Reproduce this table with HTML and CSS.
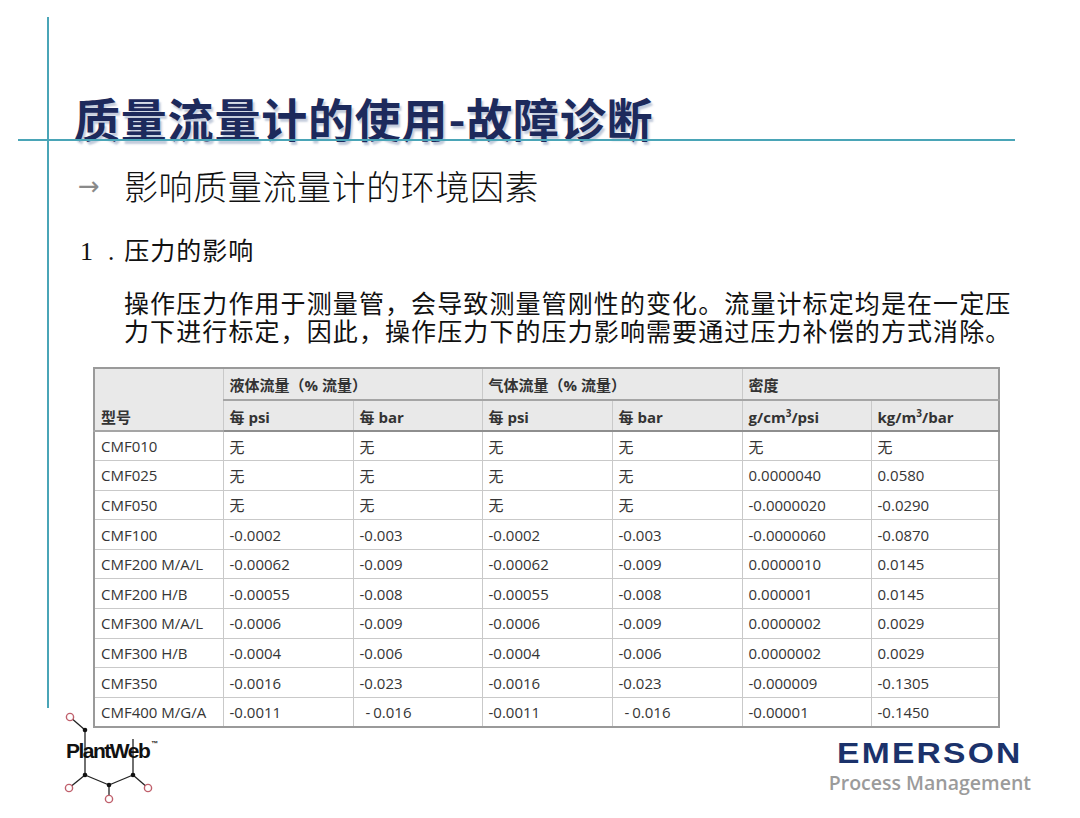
FILE: index.html
```html
<!DOCTYPE html>
<html lang="zh-CN">
<head>
<meta charset="utf-8">
<title>质量流量计的使用-故障诊断</title>
<link rel="stylesheet" href="styles.css">
</head>
<body>
<div class="slide">
  <div class="content">
    <h1 class="title">质量流量计的使用-故障诊断</h1>
    <div class="subtitle"><span class="arrow">→</span><span class="sub-text">影响质量流量计的环境因素</span></div>
    <div class="item-head"><span class="num">1</span><span class="dot">.</span><span class="item-title">压力的影响</span></div>
    <p class="para">操作压力作用于测量管，会导致测量管刚性的变化。流量计标定均是在一定压<br>力下进行标定，因此，操作压力下的压力影响需要通过压力补偿的方式消除。</p>
    <table class="spec">
      <colgroup>
        <col class="c1"><col class="c2"><col class="c3"><col class="c4"><col class="c5"><col class="c6"><col class="c7">
      </colgroup>
      <thead>
        <tr class="hr1">
          <th rowspan="2" class="model-h">型号</th>
          <th colspan="2">液体流量（% 流量）</th>
          <th colspan="2">气体流量（% 流量）</th>
          <th colspan="2">密度</th>
        </tr>
        <tr class="hr2">
          <th>每 psi</th>
          <th>每 bar</th>
          <th>每 psi</th>
          <th>每 bar</th>
          <th>g/cm<sup>3</sup>/psi</th>
          <th>kg/m<sup>3</sup>/bar</th>
        </tr>
      </thead>
      <tbody>
        <tr><td>CMF010</td><td>无</td><td>无</td><td>无</td><td>无</td><td>无</td><td>无</td></tr>
        <tr><td>CMF025</td><td>无</td><td>无</td><td>无</td><td>无</td><td>0.0000040</td><td>0.0580</td></tr>
        <tr><td>CMF050</td><td>无</td><td>无</td><td>无</td><td>无</td><td>-0.0000020</td><td>-0.0290</td></tr>
        <tr><td>CMF100</td><td>-0.0002</td><td>-0.003</td><td>-0.0002</td><td>-0.003</td><td>-0.0000060</td><td>-0.0870</td></tr>
        <tr><td>CMF200 M/A/L</td><td>-0.00062</td><td>-0.009</td><td>-0.00062</td><td>-0.009</td><td>0.0000010</td><td>0.0145</td></tr>
        <tr><td>CMF200 H/B</td><td>-0.00055</td><td>-0.008</td><td>-0.00055</td><td>-0.008</td><td>0.000001</td><td>0.0145</td></tr>
        <tr><td>CMF300 M/A/L</td><td>-0.0006</td><td>-0.009</td><td>-0.0006</td><td>-0.009</td><td>0.0000002</td><td>0.0029</td></tr>
        <tr><td>CMF300 H/B</td><td>-0.0004</td><td>-0.006</td><td>-0.0004</td><td>-0.006</td><td>0.0000002</td><td>0.0029</td></tr>
        <tr><td>CMF350</td><td>-0.0016</td><td>-0.023</td><td>-0.0016</td><td>-0.023</td><td>-0.000009</td><td>-0.1305</td></tr>
        <tr><td>CMF400 M/G/A</td><td>-0.0011</td><td><span class="ind">- 0.016</span></td><td>-0.0011</td><td><span class="ind">- 0.016</span></td><td>-0.00001</td><td>-0.1450</td></tr>
      </tbody>
    </table>
  </div>
  <footer class="footer">
    <div class="plantweb">
      <svg class="pw-net" width="100" height="100" viewBox="0 0 100 100" aria-hidden="true">
        <g stroke="#222" stroke-width="1.3" fill="none">
          <line x1="10" y1="9" x2="25" y2="22"/>
          <line x1="25" y1="22" x2="25" y2="67"/>
          <line x1="25" y1="67" x2="9" y2="80"/>
          <line x1="25" y1="67" x2="49" y2="77"/>
          <line x1="49" y1="77" x2="49" y2="91"/>
          <line x1="49" y1="77" x2="73" y2="67"/>
          <line x1="73" y1="67" x2="88" y2="80"/>
          <line x1="73" y1="67" x2="73" y2="31"/>
        </g>
        <g fill="#111">
          <circle cx="25" cy="22" r="2.3"/>
          <circle cx="25" cy="67" r="2.3"/>
          <circle cx="49" cy="77" r="2.3"/>
          <circle cx="73" cy="67" r="2.3"/>
        </g>
        <g fill="#fff" stroke="#c0606c" stroke-width="1.4">
          <circle cx="10" cy="9" r="3.6"/>
          <circle cx="9" cy="80" r="3.6"/>
          <circle cx="49" cy="91" r="3.6"/>
          <circle cx="88" cy="80" r="3.6"/>
        </g>
      </svg>
      <span class="pw-text">PlantWeb<sup class="tm">™</sup></span>
    </div>
    <div class="emerson">
      <div class="em-name">EMERSON</div>
      <div class="em-sub">Process Management</div>
    </div>
  </footer>
</div>
</body>
</html>
```

FILE: styles.css
```css
html, body {
  margin: 0;
  padding: 0;
  background: #ffffff;
}

.slide {
  position: relative;
  width: 1080px;
  height: 818px;
  overflow: hidden;
  background: #ffffff;
  font-family: "Noto Sans CJK SC", "Noto Sans", sans-serif;
  color: #111;
}

/* slide-master guide lines */
.slide::before {
  content: "";
  position: absolute;
  left: 47px;
  top: 17px;
  width: 2px;
  height: 691px;
  background: #4aa5b7;
}
.slide::after {
  content: "";
  position: absolute;
  left: 18px;
  top: 139px;
  width: 997px;
  height: 2px;
  background: #4aa5b7;
}

.content {
  padding-top: 91px;
}

.title {
  margin: 0 0 0 74px;
  font-family: "Noto Sans CJK SC", sans-serif;
  font-weight: 700;
  font-size: 46px;
  line-height: 52px;
  letter-spacing: 0.8px;
  color: #1d2a5c;
  text-shadow: 2px 3px 2px rgba(120, 140, 175, 0.45);
  white-space: nowrap;
}

.subtitle {
  display: flex;
  align-items: center;
  margin: 23px 0 0 78px;
  height: 40px;
}
.arrow {
  width: 46px;
  font-family: "DejaVu Sans", sans-serif;
  font-size: 26px;
  line-height: 40px;
  color: #8a8a8a;
}
.sub-text {
  font-family: "Noto Sans CJK SC", sans-serif;
  font-weight: 300;
  font-size: 34px;
  line-height: 40px;
  letter-spacing: 0.6px;
  color: #111;
  white-space: nowrap;
}

.item-head {
  display: flex;
  align-items: baseline;
  margin: 30px 0 0 80px;
  height: 30px;
  line-height: 30px;
}
.num {
  font-family: "Liberation Serif", serif;
  font-size: 26px;
}
.dot {
  font-family: "Liberation Serif", serif;
  font-size: 25px;
  margin-left: 15px;
  margin-right: 10px;
}
.item-title {
  font-family: "Liberation Sans", "Noto Sans CJK SC", sans-serif;
  font-weight: 400;
  font-size: 25px;
  letter-spacing: 1px;
}

.para {
  margin: 24px 0 0 124px;
  font-family: "Liberation Sans", "Noto Sans CJK SC", sans-serif;
  font-weight: 400;
  font-size: 25px;
  line-height: 28px;
  letter-spacing: 1.1px;
  white-space: nowrap;
  color: #111;
}

/* data table */
.spec {
  margin: 21px 0 0 93px;
  width: 905px;
  table-layout: fixed;
  border-collapse: collapse;
  border: 2px solid #9a9a9a;
  font-family: "Open Sans", "Noto Sans CJK SC", sans-serif;
  font-size: 15px;
  color: #353535;
}
.c1 { width: 129px; }
.c2 { width: 130px; }
.c3 { width: 129px; }
.c4 { width: 130px; }
.c5 { width: 130px; }
.c6 { width: 129px; }
.c7 { width: 128px; }

.spec th,
.spec td {
  border: 1px solid #c9c9c9;
  padding: 0 6px;
  text-align: left;
  white-space: nowrap;
}
.spec thead th {
  background: #e9e9e9;
  font-weight: 700;
  color: #333;
}
.spec .hr1 { height: 32px; }
.spec .hr1 th { border-bottom: 2px solid #a5a5a5; }
.spec .hr2 { height: 31px; }
.spec .hr2 th,
.spec .model-h {
  vertical-align: bottom;
  padding-bottom: 3px;
  border-bottom: 2px solid #8e8e8e;
}
.spec sup {
  font-size: 10px;
  line-height: 0;
  vertical-align: 6px;
}
.spec tbody tr { height: 29.6px; }
.spec tbody td { vertical-align: middle; }
.ind { padding-left: 6px; word-spacing: -1px; }

/* footer logos */
.footer {
  display: flex;
  justify-content: space-between;
  align-items: flex-start;
  margin-top: -20px;
  padding: 0 49px 0 60px;
}
.plantweb {
  position: relative;
  width: 100px;
  height: 100px;
}
.pw-net {
  display: block;
}
.pw-text {
  position: absolute;
  left: 6px;
  top: 32px;
  font-family: "Liberation Sans", sans-serif;
  font-weight: 700;
  font-size: 21px;
  line-height: 21px;
  letter-spacing: -1.5px;
  color: #111;
  white-space: nowrap;
}
.tm {
  font-size: 7px;
  vertical-align: 12px;
  line-height: 0;
  letter-spacing: 0;
  margin-left: 2px;
}

.emerson {
  margin-top: 30px;
  display: flex;
  flex-direction: column;
  align-items: center;
}
.em-name {
  font-family: "Liberation Sans", sans-serif;
  font-weight: 700;
  font-size: 30px;
  line-height: 29px;
  letter-spacing: 2px;
  color: #1b326b;
  transform: scaleX(1.12);
}
.em-sub {
  margin-top: 5px;
  font-family: "Open Sans", sans-serif;
  font-weight: 600;
  font-size: 19.5px;
  line-height: 22px;
  color: #9b9b9b;
}
```
